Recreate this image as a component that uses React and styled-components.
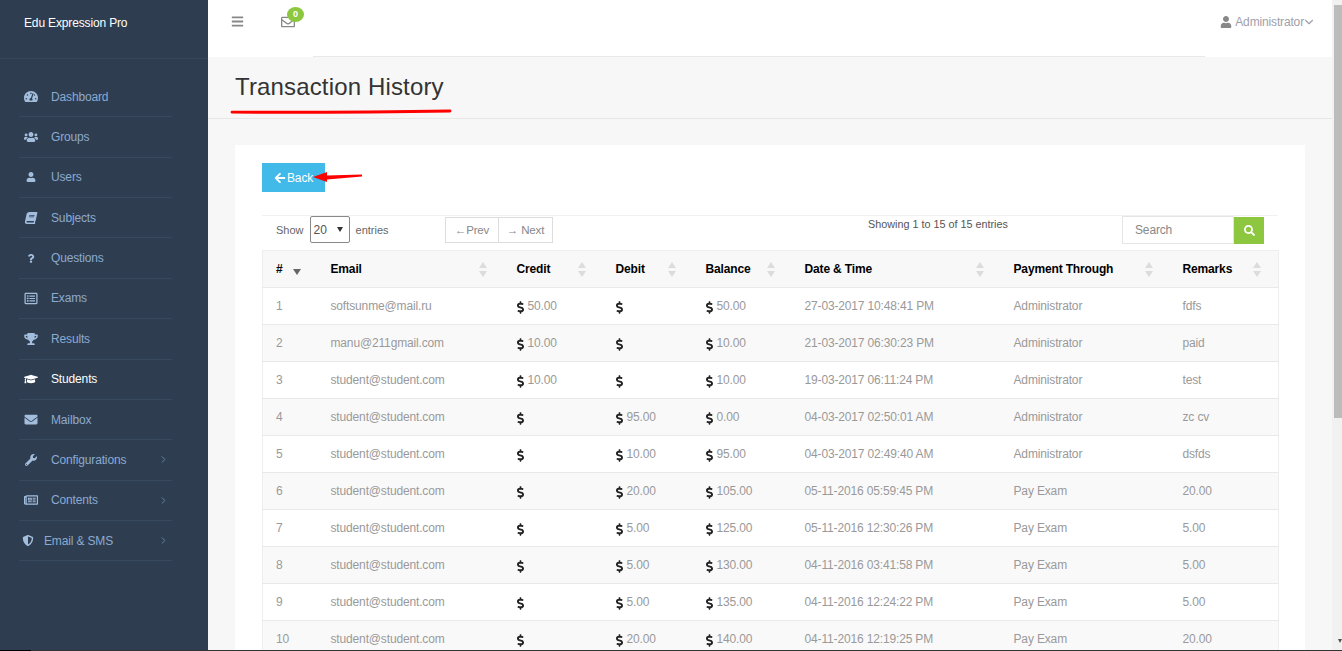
import React from "react";
import styled, { createGlobalStyle } from "styled-components";
import {
	FaTachometerAlt, FaUsers, FaUser, FaBook, FaQuestion, FaRegListAlt, FaTrophy, FaGraduationCap,
	FaEnvelope, FaWrench, FaRegNewspaper, FaShieldAlt, FaBars, FaRegEnvelope, FaArrowLeft, FaSearch, FaDollarSign,
} from "react-icons/fa";
import { ChevronDown, ChevronRight } from "lucide-react";

const GlobalStyle = createGlobalStyle`
    html, body {
        margin: 0;
        height: 100%;
        overflow: hidden;
        background: #f7f7f7;
    }
    * {
        box-sizing: border-box;
    }
    body {
        font-family: "Liberation Sans", Arial, sans-serif;
        font-size: 12px;
        letter-spacing: -0.15px;
    }
`;

const Page = styled.div`
    display: flex;
    width: 1332px;
    height: 651px;
    overflow: hidden;
`;

const Sidebar = styled.aside`
    flex: 0 0 208px;
    background: #2e3e50;
`;

const Brand = styled.div`
    height: 59px;
    padding: 16px 0 0 24px;
    color: #fff;
    line-height: 15px;
    border-bottom: 1px solid #34465a;
`;

const Menu = styled.ul`
    list-style: none;
    margin: 18px 0 0 19px;
    padding: 0;
    width: 153px;
`;

const MenuItem = styled.li`
    display: flex;
    align-items: center;
    height: 40.36px;
    padding-left: ${(p) => (p.$tight ? "2px" : "5px")};
    border-bottom: 1px solid #36495e;
    color: ${(p) => (p.$active ? "#fff" : "#8caad0")};
    svg.menu-icon {
        flex: 0 0 14px;
        color: ${(p) => (p.$active ? "#fff" : "#a3bedd")};
        transform: ${(p) => (p.$slant ? "skewX(-12deg)" : "none")};
    }
    span {
        margin-left: ${(p) => (p.$tight ? "9px" : "13px")};
        flex: 1;
    }
    svg.menu-arrow {
        margin-right: 3px;
        color: #5f87b0;
    }
`;

const Main = styled.main`
    flex: 1;
    min-width: 0;
`;

const TopBar = styled.header`
    display: flex;
    align-items: center;
    height: 57px;
    padding: 0 19px 13px 23px;
    background: #fff;
    color: #888;
    border-bottom: 1px solid transparent;
    border-image: linear-gradient(to right, #fff 106px, #e8e8e8 106px, #e8e8e8 996px, #fff 996px) 1;
`;

const MailLink = styled.div`
    position: relative;
    display: flex;
    margin-left: 37px;
    font-size: 14px;
`;

const Badge = styled.b`
    position: absolute;
    top: -8px;
    left: 6px;
    width: 17px;
    height: 15px;
    border-radius: 50%;
    background: #8dc63f;
    color: #fff;
    font-size: 9px;
    line-height: 15px;
    text-align: center;
`;

const UserMenu = styled.div`
    display: flex;
    align-items: center;
    margin-left: auto;
    color: #a0a0ac;
    svg:first-child {
        color: #888;
        margin-right: 3px;
    }
    svg:last-child {
        margin: 0 -3px 0 -2px;
    }
`;

const TitleBand = styled.div`
    position: relative;
    height: 62px;
    padding: 15px 0 0 27px;
    border-bottom: 1px solid #e7e7e7;
`;

const Title = styled.h1`
    margin: 0;
    font-size: 24px;
    line-height: 30px;
    font-weight: 400;
    letter-spacing: 0.15px;
    color: #333;
`;

const Scribble = styled.svg`
    position: absolute;
    left: ${(p) => p.$left}px;
    top: ${(p) => p.$top}px;
    pointer-events: none;
`;

const Content = styled.div`
    padding: 26px 27px 0;
`;

const Card = styled.section`
    background: #fff;
    padding: 18px 27px 20px;
`;

const BackRow = styled.div`
    position: relative;
    height: 52px;
`;

const BackButton = styled.button`
    display: flex;
    align-items: center;
    gap: 1px;
    width: 63px;
    height: 29px;
    padding: 0 0 0 12px;
    border: 0;
    background: #41b9e9;
    color: #fff;
    font: inherit;
    letter-spacing: inherit;
`;

const Controls = styled.div`
    display: flex;
    height: 35px;
    padding-left: 14px;
    border-top: 1px solid #f1f1f1;
    color: #666;
`;

const LengthGroup = styled.div`
    display: flex;
    align-items: center;
    height: 27px;
    width: 169px;
    font-size: 11px;
    letter-spacing: 0;
`;

const FakeSelect = styled.div`
    display: flex;
    align-items: center;
    justify-content: space-between;
    width: 40px;
    height: 27px;
    margin: 0 6px;
    padding: 0 6px 0 3px;
    border: 1px solid #888;
    border-radius: 2px;
    color: #555;
    font-size: 12px;
    &::after {
        content: "";
        border: 3.5px solid transparent;
        border-top: 5px solid #333;
        border-bottom: 0;
    }
`;

const Pager = styled.div`
    display: flex;
    height: 26px;
    margin-top: 1px;
    border: 1px solid #ddd;
    color: #888;
    font-size: 11.5px;
`;

const PagerLink = styled.a`
    display: flex;
    align-items: center;
    justify-content: center;
    width: ${(p) => p.$width}px;
    & + & {
        border-left: 1px solid #ddd;
    }
`;

const Info = styled.div`
    margin: 2px 0 0 315px;
    width: 254px;
    font-size: 10.8px;
    line-height: 13px;
    letter-spacing: 0;
    color: #555;
`;

const SearchInput = styled.div`
    display: flex;
    align-items: center;
    width: 112px;
    height: 28px;
    padding-left: 12px;
    border: 1px solid #e5e5e5;
    color: #888;
`;

const SearchButton = styled.button`
    display: flex;
    align-items: center;
    justify-content: center;
    width: 30px;
    height: 27px;
    margin-top: 1px;
    padding: 0;
    border: 0;
    background: #8dc63f;
    color: #fff;
    font-size: 11px;
`;

const Table = styled.table`
    width: 1016px;
    table-layout: fixed;
    border-collapse: collapse;
    border: 1px solid #eee;
`;

const HeadCell = styled.th`
    height: 37px;
    padding: 0 17px 0 13px;
    background: #f8f8f8;
    border-bottom: 1px solid #e9e9e9;
    color: #000;
    font-size: 12px;
    text-align: left;
`;

const HeadInner = styled.div`
    display: flex;
    align-items: center;
    justify-content: space-between;
`;

const Row = styled.tr`
    background: ${(p) => (p.$even ? "#f9f9f9" : "#fff")};
`;

const Cell = styled.td`
    height: 37px;
    padding: 0 14px 0 13px;
    border-bottom: 1px solid #e9e9e9;
    color: #999;
    white-space: nowrap;
`;

const Money = styled.span`
    display: flex;
    align-items: center;
    gap: 4px;
    svg {
        flex: 0 0 7px;
        width: 7px;
        height: 13px;
        color: #222;
        margin-top: 2px;
    }
`;

const ScrollTrack = styled.div`
    position: fixed;
    top: 0;
    right: 0;
    bottom: 0;
    width: 10px;
    background: #f1f1f1;
    &::after {
        content: "";
        position: absolute;
        right: 0;
        bottom: 8px;
        border: 2.5px solid transparent;
        border-top: 4px solid #505050;
        border-bottom: 0;
    }
`;

const ScrollThumb = styled.div`
    position: absolute;
    top: 5px;
    right: 0;
    width: 8px;
    height: 413px;
    background: #bcbcbc;
`;

const BottomEdge = styled.div`
    position: fixed;
    left: 0;
    right: 0;
    bottom: 0;
    height: 1px;
    background: linear-gradient(to right, #000 31px, #333 31px);
`;

const menu = [
	{ label: "Dashboard", icon: FaTachometerAlt, size: 13 },
	{ label: "Groups", icon: FaUsers, size: 14 },
	{ label: "Users", icon: FaUser, size: 10 },
	{ label: "Subjects", icon: FaBook, size: 12, slant: true },
	{ label: "Questions", icon: FaQuestion, size: 9 },
	{ label: "Exams", icon: FaRegListAlt, size: 13 },
	{ label: "Results", icon: FaTrophy, size: 12 },
	{ label: "Students", icon: FaGraduationCap, size: 14, active: true },
	{ label: "Mailbox", icon: FaEnvelope, size: 13 },
	{ label: "Configurations", icon: FaWrench, size: 12, more: true },
	{ label: "Contents", icon: FaRegNewspaper, size: 14, more: true },
	{ label: "Email & SMS", icon: FaShieldAlt, size: 11, more: true, tight: true },
];

const columns = [
	{ label: "#", width: 55 },
	{ label: "Email", width: 186 },
	{ label: "Credit", width: 99 },
	{ label: "Debit", width: 90 },
	{ label: "Balance", width: 99 },
	{ label: "Date & Time", width: 209 },
	{ label: "Payment Through", width: 169 },
	{ label: "Remarks", width: 109 },
];

const rows = [
	["softsunme@mail.ru", "50.00", "", "50.00", "27-03-2017 10:48:41 PM", "Administrator", "fdfs"],
	["manu@211gmail.com", "10.00", "", "10.00", "21-03-2017 06:30:23 PM", "Administrator", "paid"],
	["student@student.com", "10.00", "", "10.00", "19-03-2017 06:11:24 PM", "Administrator", "test"],
	["student@student.com", "", "95.00", "0.00", "04-03-2017 02:50:01 AM", "Administrator", "zc cv"],
	["student@student.com", "", "10.00", "95.00", "04-03-2017 02:49:40 AM", "Administrator", "dsfds"],
	["student@student.com", "", "20.00", "105.00", "05-11-2016 05:59:45 PM", "Pay Exam", "20.00"],
	["student@student.com", "", "5.00", "125.00", "05-11-2016 12:30:26 PM", "Pay Exam", "5.00"],
	["student@student.com", "", "5.00", "130.00", "04-11-2016 03:41:58 PM", "Pay Exam", "5.00"],
	["student@student.com", "", "5.00", "135.00", "04-11-2016 12:24:22 PM", "Pay Exam", "5.00"],
	["student@student.com", "", "20.00", "140.00", "04-11-2016 12:19:25 PM", "Pay Exam", "20.00"],
];

const SortIcon = () => (
	<svg width="8" height="15" viewBox="0 0 8 15">
		<path d="M4 0 8 6H0Z M0 9H8L4 15Z" fill="#dcdcdc" />
	</svg>
);

const SortedIcon = () => (
	<svg width="8" height="15" viewBox="0 0 8 15">
		<path d="M0 7H8L4 13Z" fill="#666" />
	</svg>
);

const Amount = ({ value }) => (
	<Money>
		<FaDollarSign />
		{value}
	</Money>
);

const App = () => {
	return (
		<>
			<GlobalStyle />
			<Page>
				<Sidebar>
					<Brand>Edu Expression Pro</Brand>
					<Menu>
						{menu.map((item) => (
							<MenuItem key={item.label} $active={item.active} $tight={item.tight} $slant={item.slant}>
								<item.icon className="menu-icon" size={item.size} />
								<span>{item.label}</span>
								{item.more && <ChevronRight className="menu-arrow" size={11} />}
							</MenuItem>
						))}
					</Menu>
				</Sidebar>
				<Main>
					<TopBar>
						<FaBars size={13} />
						<MailLink>
							<FaRegEnvelope />
							<Badge>0</Badge>
						</MailLink>
						<UserMenu>
							<FaUser size={12} />
							Administrator
							<ChevronDown size={14} />
						</UserMenu>
					</TopBar>
					<TitleBand>
						<Title>Transaction History</Title>
						<Scribble $left={22} $top={51} width="222" height="6" viewBox="0 0 222 6">
							<path d="M2 4.2C70 4.4 150 4.2 220 3" stroke="#f00" strokeWidth="2.8" strokeLinecap="round" fill="none" />
						</Scribble>
					</TitleBand>
					<Content>
						<Card>
							<BackRow>
								<BackButton>
									<FaArrowLeft size={12} />
									Back
								</BackButton>
								<Scribble $left={51} $top={7} width="50" height="14" viewBox="0 0 50 14">
									<path d="M0 7 14 2V5.4L49 4.6V6.6L14 9.6V12Z" fill="#f00" />
								</Scribble>
							</BackRow>
							<Controls>
								<LengthGroup>
									Show
									<FakeSelect>20</FakeSelect>
									entries
								</LengthGroup>
								<Pager>
									<PagerLink $width={52}>←Prev</PagerLink>
									<PagerLink $width={54}>→ Next</PagerLink>
								</Pager>
								<Info>Showing 1 to 15 of 15 entries</Info>
								<SearchInput>Search</SearchInput>
								<SearchButton>
									<FaSearch />
								</SearchButton>
							</Controls>
							<Table>
								<colgroup>
									{columns.map((col) => (
										<col key={col.label} width={col.width} />
									))}
								</colgroup>
								<thead>
									<tr>
										{columns.map((col, i) => (
											<HeadCell key={col.label}>
												<HeadInner>
													{col.label}
													{i === 0 ? <SortedIcon /> : <SortIcon />}
												</HeadInner>
											</HeadCell>
										))}
									</tr>
								</thead>
								<tbody>
									{rows.map((row, i) => (
										<Row key={i} $even={i % 2 === 1}>
											<Cell>{i + 1}</Cell>
											<Cell>{row[0]}</Cell>
											<Cell><Amount value={row[1]} /></Cell>
											<Cell><Amount value={row[2]} /></Cell>
											<Cell><Amount value={row[3]} /></Cell>
											<Cell>{row[4]}</Cell>
											<Cell>{row[5]}</Cell>
											<Cell>{row[6]}</Cell>
										</Row>
									))}
								</tbody>
							</Table>
						</Card>
					</Content>
				</Main>
			</Page>
			<ScrollTrack>
				<ScrollThumb />
			</ScrollTrack>
			<BottomEdge />
		</>
	);
};

export default App;
